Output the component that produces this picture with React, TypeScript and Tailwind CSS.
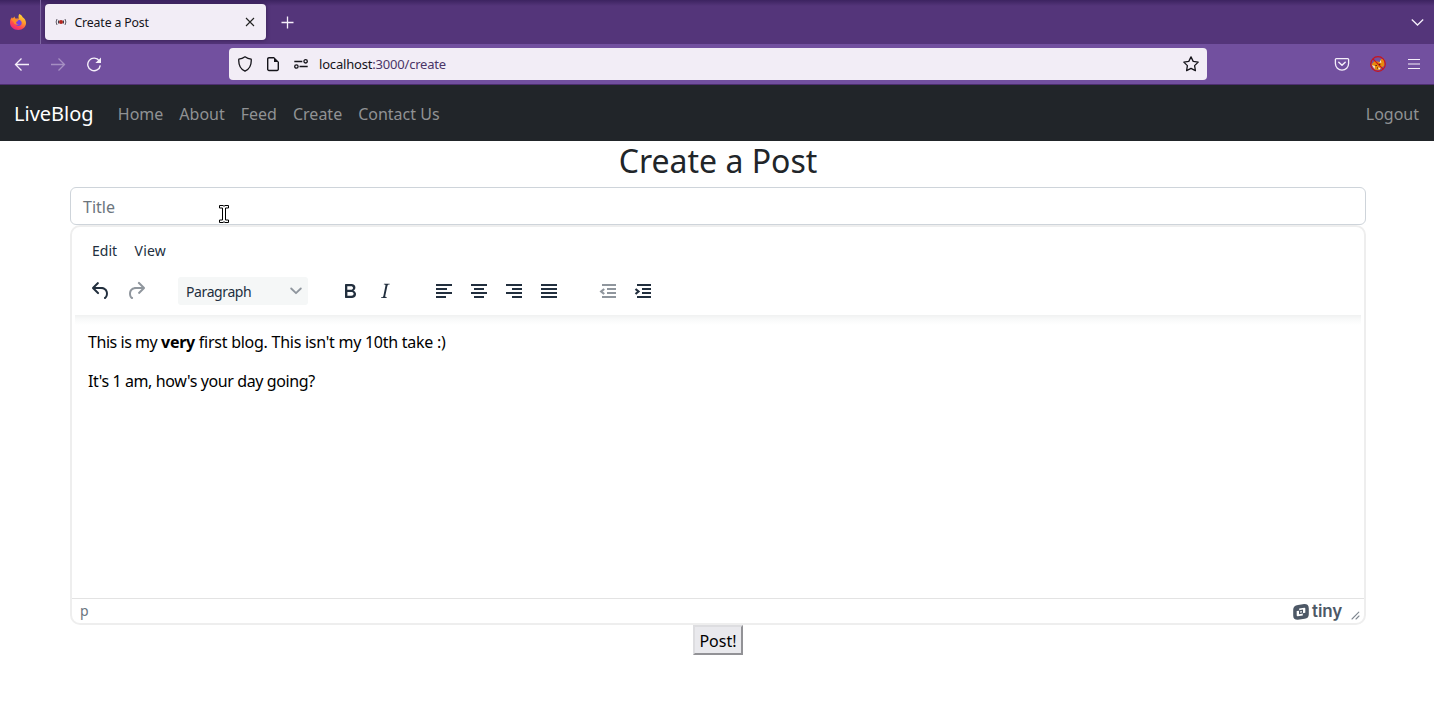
import React from "react";

const noto = "font-['Noto_Sans',sans-serif]";

function FirefoxLogo() {
  return (
    <svg width="18" height="18" viewBox="0 0 18 18">
      <defs>
        <linearGradient id="fx" x1="0.8" y1="0" x2="0.25" y2="1">
          <stop offset="0" stopColor="#ffe43b" />
          <stop offset="0.4" stopColor="#ff9a2a" />
          <stop offset="0.7" stopColor="#ff4a4e" />
          <stop offset="1" stopColor="#e8208a" />
        </linearGradient>
      </defs>
      <path d="M10.3 1c2 .8 3 2.300 3.400 3.200C15.500 5 17 7.500 17 10c0 4-3.400 7-7.700 7C4.500 17 1 13.600 1 9.500c0-2.600.9-4.300 2-5.300l.6 1.300c.9-.7 1.700-1.800 2-2 0 1.200.6 1.900 1.500 2.200 1-.2 1.600-.1 2.700.1-.5-2-.3-3.500.5-4.800z" fill="url(#fx)" />
      <path d="M5.500 8.500c1-1.700 2.600-1.800 3.700-1.700 2.200.1 3.500 1.500 3.500 3.200 0 1.900-1.500 3-3.200 3-2 0-3.500-1.200-4-4.500z" fill="#7542e5" />
      <path d="M2 6.500c2-1.600 4.500-1 5.500.5l2 .2c0 1-2 1.100-2.400 2 0 1.500 1.400 2.200 2.800 1.800-1.500 1.500-5 1-5.400-2.200z" fill="#ff8a29" />
    </svg>
  );
}

function LiveIcon() {
  return (
    <svg width="12" height="10" viewBox="0 0 12 10" fill="none">
      <path d="M2 2Q.2 5 2 8M10 2Q11.800 5 10 8" stroke="#5d5863" strokeWidth="1" />
      <path d="M3.900 3.500Q3.100 5 3.900 6.500M8.100 3.500Q8.900 5 8.100 6.500" stroke="#3a363f" strokeWidth="1.200" />
      <circle cx="6" cy="5" r="2" fill="#b3251e" />
    </svg>
  );
}

function TabStrip() {
  return (
    <div className="flex h-11 bg-[#54357a] bg-[linear-gradient(#3c2360,#54357a_6px)]">
      <div className="flex w-[41px] items-center border-r border-[#7d65a0] pl-[9px]">
        <FirefoxLogo />
      </div>
      <div className="mt-1 ml-1 flex h-9 w-[221px] items-center rounded-[4px] bg-[#f2edf6] pl-[10px] shadow-[0_0_4px_rgba(20,5,40,0.5)]">
        <LiveIcon />
        <span className="ml-[7.500px] w-[170px] pt-[2px] text-[12.300px] tracking-[-0.150px] text-[#15141a]">Create a Post</span>
        <svg width="10" height="10" viewBox="0 0 10 10" stroke="#222" strokeWidth="1.100">
          <path d="M1 1l8 8M9 1L1 9" />
        </svg>
      </div>
      <div className="flex flex-1 items-center justify-between pr-[10px] pl-[15px]">
        <svg width="13" height="13" viewBox="0 0 13 13" stroke="#f5effa" strokeWidth="1.300">
          <path d="M6.500 .5v12M.5 6.500h12" />
        </svg>
        <svg width="13" height="9" viewBox="0 0 13 9" fill="none" stroke="#f5effa" strokeWidth="1.300">
          <path d="M.8 1.500l5.700 5.500 5.700-5.500" />
        </svg>
      </div>
    </div>
  );
}

function AddressBar() {
  return (
    <div className="flex h-[41px] items-start border-b border-[#4d2f70] bg-[#72509f] pt-1">
      <div className="flex h-8 w-[229px] items-center pl-[14px]">
        <svg width="16" height="16" viewBox="0 0 16 16" fill="none" stroke="#f5effa" strokeWidth="1.300">
          <path d="M15 8.500H1.500M7.500 2.500l-6 6 6 6" />
        </svg>
        <svg className="ml-5 opacity-40" width="16" height="16" viewBox="0 0 16 16" fill="none" stroke="#f5effa" strokeWidth="1.300">
          <path d="M1 8.500h13.500M8.500 2.500l6 6-6 6" />
        </svg>
        <svg className="ml-5" width="16" height="16" viewBox="0 0 16 16" fill="none" stroke="#f5effa" strokeWidth="1.400">
          <path d="M13.300 4.900A6.300 6.300 0 1 0 14.300 9.300" />
          <path d="M15 1.500v5.600H9.400z" fill="#f5effa" stroke="none" />
        </svg>
      </div>
      <div className="flex h-8 w-[978px] items-center rounded-[4px] bg-[#f2edf6] pl-2">
        <svg width="16" height="16" viewBox="0 0 16 16" fill="none" stroke="#15141a" strokeWidth="1.300" strokeLinejoin="round">
          <path d="M8 .8c2 1.500 4 2.200 6.200 2.400.4 5.300-1.400 9.700-6.200 12C3.200 12.900 1.400 8.500 1.800 3.200 4 3 6 2.300 8 .8z" />
        </svg>
        <svg className="ml-3" width="16" height="16" viewBox="0 0 16 16" fill="none" stroke="#15141a" strokeWidth="1.400">
          <path d="M9 1.700H4A1.300 1.300 0 0 0 2.700 3v10.200a1.300 1.300 0 0 0 1.300 1.300h8a1.300 1.300 0 0 0 1.300-1.300V6" />
          <path d="M9 1l5 5H9z" fill="#15141a" stroke="none" />
        </svg>
        <svg className="ml-3" width="16" height="16" viewBox="0 0 16 16" fill="none" stroke="#15141a" strokeWidth="1.300">
          <path d="M1.300 5.500h8M6.500 10.500h8.200" />
          <circle cx="12.600" cy="5.300" r="1.700" />
          <circle cx="3.400" cy="10.500" r="1.700" />
        </svg>
        <span className="ml-[10px] flex-1 pt-[2px] text-[13px] tracking-[-0.190px] text-[#4b3568]">
          <span className="text-[#15141a]">localhost</span>:3000/create
        </span>
        <svg className="mr-2" width="16" height="16" viewBox="0 0 16 16" fill="none" stroke="#15141a" strokeWidth="1.300" strokeLinejoin="round">
          <path d="M8 .9l2.200 4.500 5 .7-3.600 3.500.8 5L8 12.300l-4.400 2.300.8-5L.8 6.100l5-.7z" />
        </svg>
      </div>
      <div className="flex h-8 flex-1 items-center justify-end gap-5 pr-3">
        <svg width="16" height="16" viewBox="0 0 16 16" fill="none" stroke="#f5effa" strokeWidth="1.300" strokeLinejoin="round">
          <path d="M2.300 2.600h11.400a.9.900 0 0 1 .9.900V7.500a6.600 6.600 0 0 1-13.200 0V3.500a.9.900 0 0 1 .9-.9z" />
          <path d="M4.800 6.300L8 9.300l3.200-3" strokeWidth="1.500" strokeLinecap="round" />
        </svg>
        <svg width="16" height="16" viewBox="0 0 16 16">
          <path d="M1.500 8.500l3-3.500L10 6l1-3 3.300.5.200 6L9 14l-4-.2z" fill="#e8890c" />
          <path d="M2 9l3 1-.5 3zM10.500 4l1 2.500-2 .5zM8 11.500l2.500.5L9 14z" fill="#f7e6ce" />
          <path d="M5.500 9.500h1.300M9 8.300h1.300M7 12h1" stroke="#40210b" strokeWidth="1.200" />
          <circle cx="8" cy="8" r="7.300" fill="none" stroke="#c8141e" strokeWidth="1.200" />
          <path d="M2.800 2.800l10.400 10.400" stroke="#c8141e" strokeWidth="1.200" />
        </svg>
        <svg width="16" height="16" viewBox="0 0 16 16" stroke="#f5effa" strokeWidth="1.200">
          <path d="M2 3.500h12M2 8h12M2 12.500h12" />
        </svg>
      </div>
    </div>
  );
}

function SiteNav() {
  return (
    <nav className="flex h-14 items-center bg-[#212529] pr-[15px] pl-[14px] text-base text-[#909294]">
      <span className="w-[103.800px] pt-px text-[20px] text-white">LiveBlog</span>
      <div className="flex flex-1 gap-4 pt-[2px]">
        <span>Home</span>
        <span>About</span>
        <span>Feed</span>
        <span>Create</span>
        <span>Contact Us</span>
      </div>
      <span className="pt-[2px]">Logout</span>
    </nav>
  );
}

function Lines({ d, faded, children }: { d: string; faded?: boolean; children?: React.ReactNode }) {
  return (
    <svg className={faded ? "opacity-50" : ""} width="18" height="16" viewBox="0 0 18 16" fill="none" stroke="#222f3e" strokeWidth="2">
      <path d={d} />
      {children}
    </svg>
  );
}

function Toolbar() {
  return (
    <div className="flex h-[47px] items-center pb-px pl-[17px]">
      <svg width="24" height="24" viewBox="0 0 24 24" fill="#222f3e">
        <path d="M6.400 8H12c3.700 0 6.200 2 6.800 5.100.6 2.700-.4 5.600-2.300 6.800a1 1 0 0 1-1-1.800c1.100-.6 1.800-2.700 1.400-4.600-.5-2.100-2.100-3.500-4.900-3.500H6.400l3.300 3.300a1 1 0 1 1-1.400 1.400l-5-5a1 1 0 0 1 0-1.400l5-5a1 1 0 0 1 1.400 1.400L6.400 8Z" />
      </svg>
      <svg className="ml-[11px] opacity-50" width="24" height="24" viewBox="0 0 24 24" fill="#222f3e">
        <path d="M17.600 10H12c-2.800 0-4.400 1.400-4.900 3.500-.4 2 .3 4 1.400 4.600a1 1 0 1 1-1 1.800c-2-1.200-2.900-4.100-2.300-6.800.6-3 3-5.100 6.800-5.100h5.600l-3.300-3.300a1 1 0 1 1 1.400-1.400l5 5a1 1 0 0 1 0 1.400l-5 5a1 1 0 0 1-1.400-1.400l3.300-3.300Z" />
      </svg>
      <div className="ml-[30px] flex h-7 w-[130px] items-center justify-between rounded-[3px] bg-[#f5f7f7] pr-[6px] pl-2">
        <span className="text-[14px] tracking-[-0.400px]">Paragraph</span>
        <svg width="12" height="8" viewBox="0 0 12 8" fill="none" stroke="#8f969e" strokeWidth="1.800" strokeLinecap="round" strokeLinejoin="round">
          <path d="M1.200 1.500L6 6.200l4.800-4.700" />
        </svg>
      </div>
      <svg className="ml-[30px]" width="24" height="24" viewBox="0 0 24 24" fill="#222f3e">
        <path fillRule="evenodd" d="M7.800 19c-.3 0-.5 0-.6-.2l-.2-.5V5.700c0-.2 0-.4.2-.5l.6-.2h5c1.500 0 2.700.3 3.500 1 .7.6 1.100 1.400 1.100 2.500a3 3 0 0 1-.6 1.900c-.4.6-1 1-1.600 1.200.4.1.9.3 1.300.6s.8.7 1 1.200c.4.4.5 1 .5 1.600 0 1.300-.4 2.300-1.300 3-.8.7-2.100 1-3.800 1H7.800Zm5-8.300c.6 0 1.200-.1 1.600-.5.4-.3.6-.7.6-1.300 0-1.100-.8-1.700-2.300-1.700H9.300v3.500h3.400Zm.5 6c.7 0 1.300-.1 1.700-.4.4-.4.6-.9.6-1.500s-.2-1-.7-1.400c-.4-.3-1-.4-2-.4H9.400v3.800h4Z" />
      </svg>
      <svg className="ml-[11px]" width="24" height="24" viewBox="0 0 24 24" fill="#222f3e">
        <path d="m16.700 4.700-.1.900h-.3c-.6 0-1 0-1.400.3-.3.3-.4.600-.5 1.100l-2.100 9.800v.6c0 .5.4.8 1.400.8h.2l-.2.800H8l.2-.8h.2c1.100 0 1.800-.5 2-1.500l2-9.800.1-.5c0-.6-.4-.8-1.400-.8h-.3l.2-.9h5.800Z" />
      </svg>
      <div className="ml-[38px] flex gap-[17px]">
        <Lines d="M1 2h16M1 6h11M1 10h16M1 14h10" />
        <Lines d="M1 2h16M4 6h10M1 10h16M4 14h10" />
        <Lines d="M1 2h16M7 6h10M1 10h16M7 14h10" />
        <Lines d="M1 2h16M1 6h16M1 10h16M1 14h16" />
      </div>
      <div className="ml-[41px] flex gap-[17px]">
        <Lines faded d="M3 2h14M8 6h9M8 10h9M3 14h14">
          <path d="M5.200 6L2.200 8.500l3 2.500" strokeWidth="2.200" />
        </Lines>
        <Lines d="M3 2h14M8 6h9M8 10h9M3 14h14">
          <path d="M1.500 6l3 2.500-3 2.500" strokeWidth="2.200" />
        </Lines>
      </div>
    </div>
  );
}

function Editor() {
  return (
    <div className="flex h-[400px] flex-col rounded-[10px] border-2 border-[#eee] bg-white text-[#222f3e]">
      <div className="flex h-[41px] items-center gap-[17.500px] pt-[5px] pl-5 text-[14px]">
        <span>Edit</span>
        <span className="tracking-[0.200px]">View</span>
      </div>
      <Toolbar />
      <div className="mx-[3px] h-[10px] bg-[linear-gradient(#f0f1f1,#f8f9f9_4px,#fff)]" />
      <div className="flex-1 pt-[6px] pl-4 text-[16px] leading-[22.400px] text-black">
        <p className="tracking-[-0.260px]">
          <span className="tracking-[-0.450px]">This is my </span>
          <b>very</b> first blog. This isn't my 10th take :)
        </p>
        <p className="mt-[16.600px] tracking-[-0.400px]">It's 1 am, how's your day going?</p>
      </div>
      <div className="flex h-[25px] items-center border-t border-[#e3e3e3] pr-[3px] pl-2">
        <span className="flex-1 pb-[2px] text-[14px] text-[#6b7580]">p</span>
        <svg className="mt-px" width="16" height="16" viewBox="0 0 16 16">
          <path fillRule="evenodd" fill="#4d5866" d="M5 .9L11.200.1Q15.800 0 15.800 4.500V10.300q0 4-4.100 4.500L4.800 15.800Q.2 15.900.2 11.500V5.800Q.2 1.500 5 .9zM6.200 4.400V6.700L3.700 7.100V11.300q0 1 1 .9L9.800 11.500V9.200L12.300 8.800V4.600q0-1-1-.9z" />
          <path fill="#4d5866" d="M6 6.200l4-.6v4l-4 .6z" />
          <path fill="#fff" d="M7.200 7.300l1.600-.2v1.500l-1.600.2z" />
        </svg>
        <span className="ml-[3px] w-[39px] font-['Inter',sans-serif] text-[17px] leading-[20px] font-semibold tracking-[-0.100px] text-[#4d5866]">tiny</span>
        <svg className="mt-[8px]" width="10" height="10" viewBox="0 0 10 10" stroke="#7f8790" strokeWidth="1.100" strokeLinecap="round">
          <path d="M1 9l6.800-6.800M5 9l3-3" />
        </svg>
      </div>
    </div>
  );
}

export default function App() {
  return (
    <div className={`${noto} relative h-[702px] overflow-hidden bg-white`}>
      <TabStrip />
      <AddressBar />
      <SiteNav />
      <main className="mx-auto w-[1296px] translate-x-px">
        <h1 className="h-[46px] text-center text-[32px] leading-[39px] text-[#212529]">Create a Post</h1>
        <div className="flex h-[38px] items-center rounded-[6px] border border-[#ced4da] pt-[2px] pl-3 text-[16px] text-[#6c757d]">Title</div>
        <Editor />
        <div className="flex justify-center">
          <button className="h-[30px] w-[50px] border-2 border-t-[#dddde0] border-r-[#929296] border-b-[#929296] border-l-[#dddde0] bg-[#e9e9ed] pt-px text-[16px] leading-[26px] text-black">Post!</button>
        </div>
      </main>
      <svg className="absolute top-[205px] left-[219px]" width="10" height="18" viewBox="0 0 10 18">
        <path d="M.5.500h3.500l1 .8 1-.8h3.500v2.500H6.500v12h3v2.500H6l-1-.8-1 .8H.5v-2.500h3v-12h-3z" fill="#fff" stroke="#000" strokeWidth="1" />
      </svg>
    </div>
  );
}
